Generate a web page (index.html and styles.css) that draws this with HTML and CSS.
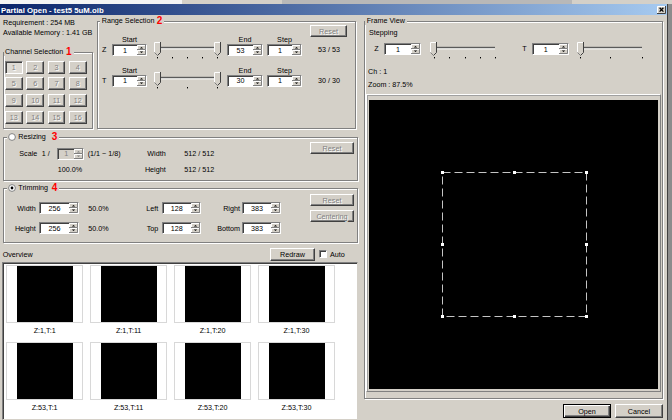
FILE: index.html
```html
<!DOCTYPE html>
<html lang="en">
<head>
<meta charset="utf-8">
<title>Partial Open</title>
<link rel="stylesheet" href="styles.css">
</head>
<body>
<svg class="defs" width="0" height="0" aria-hidden="true">
  <defs>
    <symbol id="arr" viewBox="0 0 9 10">
      <rect x="0" y="0" width="9" height="10" fill="#d4d0c8"/>
      <path d="M0.5 4.5V0.5H8" stroke="#fff" fill="none"/>
      <path d="M8.5 0V4.5H0" stroke="#808080" fill="none"/>
      <path d="M0.5 9.5V5.5H8" stroke="#fff" fill="none"/>
      <path d="M8.5 5V9.5H0" stroke="#808080" fill="none"/>
      <path d="M2.8 3.6L4.5 1.9L6.2 3.6Z" fill="#000"/>
      <path d="M2.8 6.4H6.2L4.5 8.1Z" fill="#000"/>
    </symbol>
    <symbol id="arrd" viewBox="0 0 9 10">
      <rect x="0" y="0" width="9" height="10" fill="#d4d0c8"/>
      <path d="M0.5 4.5V0.5H8" stroke="#fff" fill="none"/>
      <path d="M8.5 0V4.5H0" stroke="#808080" fill="none"/>
      <path d="M0.5 9.5V5.5H8" stroke="#fff" fill="none"/>
      <path d="M8.5 5V9.5H0" stroke="#808080" fill="none"/>
      <path d="M2.8 3.6L4.5 1.9L6.2 3.6Z" fill="#808080"/>
      <path d="M2.8 6.4H6.2L4.5 8.1Z" fill="#808080"/>
    </symbol>
    <symbol id="thumb" viewBox="0 0 7 14">
      <path d="M0.5 0.5H6.5V10.5L3.5 13.5L0.5 10.5Z" fill="#d4d0c8"/>
      <path d="M0.5 10.5V0.5H6" stroke="#fff" fill="none"/>
      <path d="M6.5 0V10.5L3.5 13.5" stroke="#404040" fill="none"/>
      <path d="M0.5 10.5L3.2 13.2" stroke="#808080" fill="none"/>
    </symbol>
  </defs>
</svg>

<div class="screen">
  <div class="behind"><span class="bh-white"></span><span class="bh-gray"></span><span class="bh-dark"></span></div>
  <div class="main">
    <div class="window">
      <div class="titlebar">
        <span class="title">Partial Open - test5 5uM.oib</span>
        <svg class="close" viewBox="0 0 9 8">
          <rect x="0" y="0" width="9" height="8" fill="#d4d0c8"/>
          <path d="M0.5 7.5V0.5H8.5" stroke="#fff" fill="none"/>
          <path d="M8.5 0V7.5H0" stroke="#404040" fill="none"/>
          <path d="M2.6 1.8L6.4 5.6M6.4 1.8L2.6 5.6" stroke="#000" stroke-width="1.3"/>
        </svg>
      </div>
      <div class="client">
        <div class="left">
          <div class="toprow">
            <div class="leftcol">
              <div class="info">Requirement : 254 MB<br>Available Memory : 1.41 GB</div>
              <div class="group channel">
                <div class="legend"><span class="lg-text">Channel Selection</span><span class="num">1</span></div>
                <div class="chgrid">
                  <span class="cbtn sel">1</span><span class="cbtn">2</span><span class="cbtn">3</span><span class="cbtn">4</span>
                  <span class="cbtn">5</span><span class="cbtn">6</span><span class="cbtn">7</span><span class="cbtn">8</span>
                  <span class="cbtn">9</span><span class="cbtn">10</span><span class="cbtn">11</span><span class="cbtn">12</span>
                  <span class="cbtn">13</span><span class="cbtn">14</span><span class="cbtn">15</span><span class="cbtn">16</span>
                </div>
              </div>
            </div>
            <div class="group range">
              <div class="legend"><span class="lg-text">Range Selection</span><span class="num">2</span></div>
              <div class="reset-row"><span class="btn dis rbtn">Reset</span></div>
              <div class="axis">
                <span class="lab c2">Start</span>
                <span class="lab c6">End</span>
                <span class="lab c8">Step</span>
                <span class="ax">Z</span>
                <span class="spin c2"><span class="val">1</span><svg class="arr"><use href="#arr"/></svg></span>
                <svg class="slider c4" viewBox="0 0 67 18">
                  <rect x="2" y="4.8" width="63" height="1.6" fill="#5a5a5a"/>
                  <rect x="2" y="6.4" width="63" height="1" fill="#fff"/>
                  <rect x="3" y="15" width="1" height="1.4" fill="#000"/>
                  <rect x="18" y="15" width="1" height="1.4" fill="#000"/>
                  <rect x="33" y="15" width="1" height="1.4" fill="#000"/>
                  <rect x="48" y="15" width="1" height="1.4" fill="#000"/>
                  <rect x="63" y="15" width="1" height="1.4" fill="#000"/>
                  <use href="#thumb" x="0" y="0" width="7" height="14"/>
                  <use href="#thumb" x="60" y="0" width="7" height="14"/>
                </svg>
                <span class="spin c6"><span class="val">53</span><svg class="arr"><use href="#arr"/></svg></span>
                <span class="spin c8"><span class="val">1</span><svg class="arr"><use href="#arr"/></svg></span>
                <span class="count">53 / 53</span>
              </div>
              <div class="axis">
                <span class="lab c2">Start</span>
                <span class="lab c6">End</span>
                <span class="lab c8">Step</span>
                <span class="ax">T</span>
                <span class="spin c2"><span class="val">1</span><svg class="arr"><use href="#arr"/></svg></span>
                <svg class="slider c4" viewBox="0 0 67 18">
                  <rect x="2" y="4.8" width="63" height="1.6" fill="#5a5a5a"/>
                  <rect x="2" y="6.4" width="63" height="1" fill="#fff"/>
                  <rect x="3" y="15" width="1" height="1.4" fill="#000"/>
                  <rect x="33" y="15" width="1" height="1.4" fill="#000"/>
                  <rect x="63" y="15" width="1" height="1.4" fill="#000"/>
                  <use href="#thumb" x="0" y="0" width="7" height="14"/>
                  <use href="#thumb" x="60" y="0" width="7" height="14"/>
                </svg>
                <span class="spin c6"><span class="val">30</span><svg class="arr"><use href="#arr"/></svg></span>
                <span class="spin c8"><span class="val">1</span><svg class="arr"><use href="#arr"/></svg></span>
                <span class="count">30 / 30</span>
              </div>
            </div>
          </div>

          <div class="group resize">
            <div class="legend">
              <svg class="radio" viewBox="0 0 8 8"><circle cx="4" cy="4" r="3.4" fill="#fff" stroke="#808080"/></svg>
              <span class="lg-text">Resizing</span><span class="num">3</span>
            </div>
            <div class="gbody">
              <div class="rs-fields">
                <span class="g2">Scale</span>
                <span class="g3">1 /</span>
                <span class="spin dis g4"><span class="val">1</span><svg class="arr"><use href="#arrd"/></svg></span>
                <span class="g5 pl">(1/1 ~ 1/8)</span>
                <span class="g6 r">Width</span>
                <span class="g8">512 / 512</span>
                <span class="g4 row2 pct">100.0%</span>
                <span class="g6 r row2">Height</span>
                <span class="g8 row2">512 / 512</span>
              </div>
              <div class="side"><span class="btn dis">Reset</span></div>
            </div>
          </div>

          <div class="group trim">
            <div class="legend">
              <svg class="radio" viewBox="0 0 8 8"><circle cx="4" cy="4" r="3.4" fill="#fff" stroke="#808080"/><circle cx="4" cy="4" r="1.4" fill="#000"/></svg>
              <span class="lg-text">Trimming</span><span class="num">4</span>
            </div>
            <div class="gbody">
              <div class="tr-fields">
                <span class="t1 r">Width</span>
                <span class="spin t3"><span class="val">256</span><svg class="arr"><use href="#arr"/></svg></span>
                <span class="t5">50.0%</span>
                <span class="t6 r">Left</span>
                <span class="spin t8"><span class="val">128</span><svg class="arr"><use href="#arr"/></svg></span>
                <span class="t9 r">Right</span>
                <span class="spin t11"><span class="val">383</span><svg class="arr"><use href="#arr"/></svg></span>

                <span class="t1 r row2">Height</span>
                <span class="spin t3 row2"><span class="val">256</span><svg class="arr"><use href="#arr"/></svg></span>
                <span class="t5 row2">50.0%</span>
                <span class="t6 r row2">Top</span>
                <span class="spin t8 row2"><span class="val">128</span><svg class="arr"><use href="#arr"/></svg></span>
                <span class="t9 r row2">Bottom</span>
                <span class="spin t11 row2"><span class="val">383</span><svg class="arr"><use href="#arr"/></svg></span>
              </div>
              <div class="side"><span class="btn dis">Reset</span><span class="btn dis">Centering</span></div>
            </div>
          </div>

          <div class="ovhead">
            <span class="ovt">Overview</span>
            <span class="btn redraw">Redraw</span>
            <span class="chk"></span>
            <span class="auto">Auto</span>
          </div>
          <div class="ovlist">
            <div class="thumbs">
              <div class="tcell"><div class="tframe"><div class="timg"></div></div><div class="tlab">Z:1,T:1</div></div>
              <div class="tcell"><div class="tframe"><div class="timg"></div></div><div class="tlab">Z:1,T:11</div></div>
              <div class="tcell"><div class="tframe"><div class="timg"></div></div><div class="tlab">Z:1,T:20</div></div>
              <div class="tcell"><div class="tframe"><div class="timg"></div></div><div class="tlab">Z:1,T:30</div></div>
              <div class="tcell"><div class="tframe"><div class="timg"></div></div><div class="tlab">Z:53,T:1</div></div>
              <div class="tcell"><div class="tframe"><div class="timg"></div></div><div class="tlab">Z:53,T:11</div></div>
              <div class="tcell"><div class="tframe"><div class="timg"></div></div><div class="tlab">Z:53,T:20</div></div>
              <div class="tcell"><div class="tframe"><div class="timg"></div></div><div class="tlab">Z:53,T:30</div></div>
            </div>
          </div>
        </div>

        <div class="right">
          <div class="group frame">
            <div class="legend"><span>Frame View</span></div>
            <div class="stepping">Stepping</div>
            <div class="fv-row">
              <span class="ax">Z</span>
              <span class="spin f2"><span class="val">1</span><svg class="arr"><use href="#arr"/></svg></span>
              <svg class="slider f4" viewBox="0 0 67 18">
                <rect x="2" y="4.8" width="63" height="1.6" fill="#5a5a5a"/>
                <rect x="2" y="6.4" width="63" height="1" fill="#fff"/>
                <rect x="4" y="15" width="1" height="1.4" fill="#000"/>
                <rect x="19" y="15" width="1" height="1.4" fill="#000"/>
                <rect x="35" y="15" width="1" height="1.4" fill="#000"/>
                <rect x="50" y="15" width="1" height="1.4" fill="#000"/>
                <rect x="65" y="15" width="1" height="1.4" fill="#000"/>
                <use href="#thumb" x="0" y="0" width="7" height="14"/>
              </svg>
              <span class="ax ax2">T</span>
              <span class="spin f6"><span class="val">1</span><svg class="arr"><use href="#arr"/></svg></span>
              <svg class="slider f8" viewBox="0 0 67 18">
                <rect x="2" y="4.8" width="63" height="1.6" fill="#5a5a5a"/>
                <rect x="2" y="6.4" width="63" height="1" fill="#fff"/>
                <rect x="3" y="15" width="1" height="1.4" fill="#000"/>
                <rect x="33" y="15" width="1" height="1.4" fill="#000"/>
                <rect x="65" y="15" width="1" height="1.4" fill="#000"/>
                <use href="#thumb" x="0" y="0" width="7" height="14"/>
              </svg>
            </div>
            <div class="ch">Ch : 1</div>
            <div class="zoom">Zoom : 87.5%</div>
            <div class="canvas-wrap">
              <div class="canvas">
                <svg class="roi" viewBox="0 0 148 148">
                  <rect x="2.5" y="2.5" width="144" height="144" fill="none" stroke="#c4c4c4" stroke-dasharray="8 4"/>
                  <rect x="1" y="1" width="3" height="3" fill="#fff"/>
                  <rect x="73" y="1" width="3" height="3" fill="#fff"/>
                  <rect x="145" y="1" width="3" height="3" fill="#fff"/>
                  <rect x="1" y="73" width="3" height="3" fill="#fff"/>
                  <rect x="145" y="73" width="3" height="3" fill="#fff"/>
                  <rect x="1" y="145" width="3" height="3" fill="#fff"/>
                  <rect x="73" y="145" width="3" height="3" fill="#fff"/>
                  <rect x="145" y="145" width="3" height="3" fill="#fff"/>
                </svg>
              </div>
            </div>
          </div>
          <div class="dlg-btns">
            <span class="btn def">Open</span>
            <span class="btn">Cancel</span>
          </div>
        </div>
      </div>
    </div>
    <div class="edge"></div>
  </div>
</div>
</body>
</html>
```

FILE: styles.css
```css
* { box-sizing: border-box; }
html, body { margin: 0; padding: 0; }
body {
  width: 672px;
  height: 420px;
  overflow: hidden;
  background: #808080;
  font-family: "Liberation Sans", Arial, sans-serif;
  font-size: 7.2px;
  color: #000;
}
.defs { display: block; width: 0; height: 0; overflow: hidden; }

.screen { width: 672px; height: 420px; overflow: hidden; display: flex; flex-direction: column; }
.behind { height: 4px; flex: none; display: flex; background: #d4d0c8; }
.bh-white { width: 182px; background: #f4f4f4; }
.bh-gray { width: 100px; background: #d4d0c8; }
.bh-dark { width: 290px; background: #b8b8b8; }

.main { flex: 1; display: flex; min-height: 0; }
.window {
  width: 668px;
  flex: none;
  background: #d4d0c8;
  border-right: 1px solid #404040;
  display: flex;
  flex-direction: column;
}
.edge { flex: 1; background: #8c8c8c; }

.titlebar {
  height: 11px;
  flex: none;
  display: flex;
  align-items: center;
  background: linear-gradient(to right, #0a246a, #a6caf0);
}
.title {
  flex: 1;
  color: #fff;
  font-weight: bold;
  font-size: 7.8px;
  line-height: 11px;
  padding-left: 1px;
  margin-top: 1px;
  white-space: nowrap;
}
.close { width: 9px; height: 8px; margin: 1.5px 1px 0 0; display: block; }

.client { flex: 1; display: flex; min-height: 0; }
.left { width: 359px; flex: none; padding-top: 3px; display: flex; flex-direction: column; }
.right { width: 299px; flex: none; margin-left: 5px; padding-top: 6px; display: flex; flex-direction: column; }

/* group boxes */
.group {
  flex: none;
  border: 1px solid #808080;
  box-shadow: inset 1px 1px #fff, 1px 1px #fff;
}
.legend {
  display: flex;
  align-items: center;
  width: max-content;
  height: 8px;
  line-height: 8px;
  margin-top: -5px;
  padding: 0 2px;
  background: #d4d0c8;
  white-space: nowrap;
}
.num { color: #f00; font-weight: bold; font-size: 10px; line-height: 8px; }

/* info + channel */
.toprow { display: flex; align-items: flex-start; }
.leftcol { width: 93px; flex: none; }
.info { padding-left: 3px; line-height: 10px; white-space: nowrap; }
.channel { margin: 14px 0 0 3px; width: 90px; height: 77px; }
.channel .legend { padding-left: 1px; }
.channel .lg-text { width: 61px; }
.chgrid {
  display: grid;
  grid-template-columns: repeat(4, 17.7px);
  grid-auto-rows: 13px;
  column-gap: 3.63px;
  row-gap: 3.7px;
  margin: 4.7px 0 0 1px;
}
.cbtn {
  display: flex;
  align-items: center;
  justify-content: center;
  background: #d4d0c8;
  border: 1px solid;
  border-color: #fff #404040 #404040 #fff;
  box-shadow: inset -1px -1px #808080;
  color: #808080;
  text-shadow: 1px 1px #fff;
}
.cbtn.sel {
  border-color: #808080 #fff #fff #808080;
  box-shadow: inset 1px 1px #404040;
  background: #dedbd5;
}

/* buttons */
.btn {
  display: flex;
  align-items: center;
  justify-content: center;
  background: #d4d0c8;
  border: 1px solid;
  border-color: #fff #404040 #404040 #fff;
  box-shadow: inset -1px -1px #808080;
  white-space: nowrap;
}
.btn.dis { color: #808080; text-shadow: 1px 1px #fff; }
.btn.def {
  border: 1px solid #000;
  box-shadow: inset 1px 1px #fff, inset -1px -1px #404040, inset -2px -2px #808080;
}

/* spinners */
.spin {
  display: flex;
  height: 12px;
  background: #fff;
  border: 1px solid;
  border-color: #808080 #fff #fff #808080;
  box-shadow: inset 1px 1px #404040;
}
.spin .val { flex: 1; text-align: center; line-height: 10px; padding-top: 0.5px; }
.spin .arr { width: 9px; height: 10px; flex: none; display: block; }
.spin.dis { background: #d4d0c8; color: #808080; }

/* range selection */
.range { margin: 3px 0 0 4px; width: 259px; height: 108px; }
.range .legend { margin-left: 1.7px; }
.range .lg-text { width: 55px; }
.reset-row { display: flex; justify-content: flex-end; padding-right: 8px; height: 12px; }
.rbtn { width: 37px; height: 12px; }
.axis {
  display: grid;
  grid-template-columns: 14px 35px 7px 67px 6px 36px 4px 35px 16px auto;
  grid-template-rows: 8px 12px;
  margin-top: -1px;
}
.axis + .axis { margin-top: 10.5px; }
.axis .lab { grid-row: 1; text-align: center; line-height: 8px; }
.axis .ax { grid-row: 2; grid-column: 1; padding-left: 4px; line-height: 12px; }
.axis .spin { grid-row: 2; }
.axis .c2 { grid-column: 2; }
.axis .c4 { grid-column: 4; }
.axis .c6 { grid-column: 6; }
.axis .c8 { grid-column: 8; }
.axis .count { grid-row: 2; grid-column: 10; line-height: 12px; white-space: nowrap; }
.slider { display: block; width: 67px; height: 18px; align-self: start; }
.axis .slider { grid-row: 2; margin-top: -2.3px; }

/* resizing / trimming */
.resize { margin: 8px 0 0 3px; width: 355px; height: 44px; }
.trim { margin: 7px 0 0 3px; width: 355px; height: 55px; }
.resize .legend, .trim .legend { margin-left: 3px; padding-left: 1.3px; }
.resize .lg-text, .trim .lg-text { width: 33.4px; }
.radio { width: 8px; height: 8px; margin-right: 2px; display: block; flex: none; }
.gbody { display: flex; align-items: flex-start; }
.side { margin-left: auto; margin-right: 3px; display: flex; flex-direction: column; gap: 4px; }
.side .btn { width: 44px; height: 12px; }
.resize .side { margin-top: 1.3px; }
.trim .side { margin-top: 2px; }

.rs-fields {
  display: grid;
  grid-template-columns: 15.3px 22.4px 15.6px 27px 45.7px 35.7px 18.6px auto;
  grid-template-rows: 12px 10px;
  row-gap: 5.3px;
  margin-top: 6.7px;
  align-items: center;
  white-space: nowrap;
}
.rs-fields > * { grid-row: 1; }
.rs-fields > .row2 { grid-row: 2; line-height: 10px; }
.g2 { grid-column: 2; }
.g3 { grid-column: 3; }
.g4 { grid-column: 4; }
.g5 { grid-column: 5; }
.g6 { grid-column: 6; }
.g8 { grid-column: 8; }
.pl { padding-left: 3.4px; }
.pct { padding-left: 0.4px; }
.r { text-align: right; }

.tr-fields {
  display: grid;
  grid-template-columns: 31.7px 3.3px 40px 9.3px 31.7px 38.3px 3.4px 39.3px 39px 2.3px 38.7px;
  grid-template-rows: 12px 12px;
  row-gap: 8px;
  margin-top: 10.3px;
  align-items: center;
  white-space: nowrap;
}
.tr-fields > * { grid-row: 1; }
.tr-fields > .row2 { grid-row: 2; }
.t1 { grid-column: 1; }
.t3 { grid-column: 3; }
.t5 { grid-column: 5; }
.t6 { grid-column: 6; }
.t8 { grid-column: 8; }
.t9 { grid-column: 9; }
.t11 { grid-column: 11; }

/* overview */
.ovhead { display: flex; align-items: center; height: 14px; margin-top: 4px; flex: none; }
.ovt { flex: 1; padding-left: 2.7px; }
.redraw { width: 45px; height: 13px; }
.chk {
  width: 8px;
  height: 8px;
  margin-left: 4px;
  background: #fff;
  border: 1px solid;
  border-color: #808080 #fff #fff #808080;
  box-shadow: inset 1px 1px #404040;
}
.auto { width: 32px; padding-left: 3px; }
.ovlist {
  flex: none;
  margin: 1px 0 0 2px;
  width: 356px;
  height: 158px;
  background: #fff;
  border: 1px solid;
  border-color: #808080 #d4d0c8 #d4d0c8 #808080;
  box-shadow: inset 1px 1px #404040;
  padding: 2px 0 0 3px;
  overflow: hidden;
}
.thumbs {
  display: grid;
  grid-template-columns: repeat(4, 77.3px);
  column-gap: 6.7px;
  row-gap: 6.7px;
}
.tcell { display: flex; flex-direction: column; }
.tframe {
  height: 58px;
  border: 1px solid #d8d8d8;
  background: #fff;
  display: flex;
  align-items: center;
  justify-content: center;
}
.timg { width: 56px; height: 56px; background: #000; }
.tlab { margin-top: 2.7px; line-height: 10px; text-align: center; white-space: nowrap; }

/* frame view */
.frame { width: 299px; height: 378px; }
.frame .legend { margin-left: 0; padding: 0 1.7px; }
.stepping { margin-top: 3px; padding-left: 4px; line-height: 10px; }
.fv-row {
  display: grid;
  grid-template-columns: 19px 37px 9px 66.7px 35px 37.3px 8.3px 67px;
  grid-template-rows: 12px;
  margin-top: 5.3px;
}
.fv-row .ax { grid-column: 1; padding-left: 9.3px; line-height: 12px; }
.fv-row .ax2 { grid-column: 5; padding-left: 25.6px; }
.fv-row .f2 { grid-column: 2; }
.fv-row .f4 { grid-column: 4; margin-top: -1.6px; }
.fv-row .f6 { grid-column: 6; }
.fv-row .f8 { grid-column: 8; margin-top: -1.6px; }
.ch { margin-top: 11.7px; padding-left: 3px; line-height: 10px; }
.zoom { margin-top: 3px; padding-left: 3px; line-height: 10px; }
.canvas-wrap {
  margin: 4.3px 0 0 1px;
  width: 295px;
  height: 298px;
  border: 1px solid;
  border-color: #fff #808080 #808080 #fff;
  box-shadow: inset 1px 1px #a0a0a0;
  padding: 4.7px 0 0 2px;
}
.canvas {
  width: 289px;
  height: 289px;
  background: #000;
  display: flex;
  align-items: center;
  justify-content: center;
}
.roi { width: 148px; height: 148px; display: block; }

.dlg-btns { display: flex; justify-content: flex-end; gap: 4px; margin-top: 5px; }
.dlg-btns .btn { width: 48px; height: 14px; }
```
